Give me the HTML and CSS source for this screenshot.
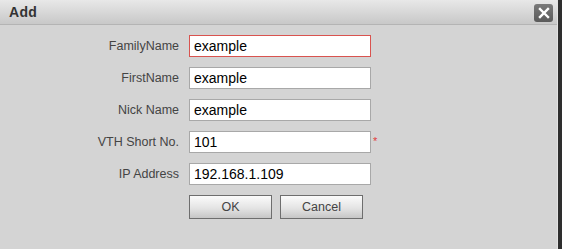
FILE: index.html
```html
<!DOCTYPE html>
<html lang="en">
<head>
    <meta charset="UTF-8">
    <title>Add</title>
    <link rel="stylesheet" href="styles.css">
</head>
<body>
    <div class="dialog">
        <div class="title-bar">
            <span class="title">Add</span>
            <span class="close-button">
                <svg width="12" height="12" viewBox="0 0 12 12"><path d="M2 2 L10 10 M10 2 L2 10" stroke="#fff" stroke-width="2.4" stroke-linecap="square"/></svg>
            </span>
        </div>
        <div class="content">
            <div class="form-row">
                <label class="form-label">FamilyName</label>
                <input class="form-input error" type="text" value="example">
            </div>
            <div class="form-row">
                <label class="form-label">FirstName</label>
                <input class="form-input" type="text" value="example">
            </div>
            <div class="form-row">
                <label class="form-label">Nick Name</label>
                <input class="form-input" type="text" value="example">
            </div>
            <div class="form-row">
                <label class="form-label">VTH Short No.</label>
                <input class="form-input" type="text" value="101">
                <span class="required">*</span>
            </div>
            <div class="form-row">
                <label class="form-label">IP Address</label>
                <input class="form-input" type="text" value="192.168.1.109">
            </div>
            <div class="button-row">
                <button class="dialog-button">OK</button>
                <button class="dialog-button">Cancel</button>
            </div>
        </div>
    </div>
</body>
</html>
```
FILE: styles.css
```css
body {
    margin: 0;
    height: 249px;
    overflow: hidden;
    background-color: #2e2e2e;
    font-family: Arial, "Liberation Sans", sans-serif;
}
.dialog {
    width: 557px;
    height: 249px;
    background-color: #d4d4d4;
    border-right: 1px solid #e2e2e2;
}
.title-bar {
    height: 24px;
    display: flex;
    align-items: center;
    justify-content: space-between;
    padding: 0 4px 0 9px;
    background: linear-gradient(#e8e8e8, #c8c8c8);
    border-bottom: 1px solid #b4b4b4;
}
.title {
    font-size: 14px;
    font-weight: bold;
    color: #333;
    letter-spacing: 0.3px;
}
.close-button {
    width: 19px;
    height: 18px;
    margin-top: 1px;
    display: flex;
    align-items: center;
    justify-content: center;
    background: linear-gradient(#7a7a7a, #5a5a5a);
    border-radius: 3px;
}
.content {
    padding-top: 10px;
}
.form-row {
    display: flex;
    align-items: center;
    height: 22px;
    margin-bottom: 10px;
}
.form-label {
    width: 189px;
    padding-right: 10px;
    box-sizing: border-box;
    text-align: right;
    font-size: 12.5px;
    color: #444;
}
.form-input {
    width: 182px;
    height: 22px;
    box-sizing: border-box;
    margin: 0;
    padding: 0 4px;
    border: 1px solid #a8a8a8;
    background-color: #fff;
    font-family: Arial, "Liberation Sans", sans-serif;
    font-size: 14px;
    color: #000;
    outline: none;
}
.form-input.error {
    border-color: #d9534f;
}
.required {
    color: #e23c3c;
    font-size: 11px;
    align-self: flex-start;
    margin-left: 2px;
    margin-top: 4px;
}
.button-row {
    display: flex;
    gap: 8px;
    padding-left: 189px;
}
.dialog-button {
    width: 83px;
    height: 24px;
    margin: 0;
    border: 1px solid #6e6e6e;
    background: linear-gradient(#fbfbfb, #e4e4e4 55%, #c6c6c6);
    font-family: Arial, "Liberation Sans", sans-serif;
    font-size: 12.5px;
    color: #444;
    cursor: pointer;
}
```
